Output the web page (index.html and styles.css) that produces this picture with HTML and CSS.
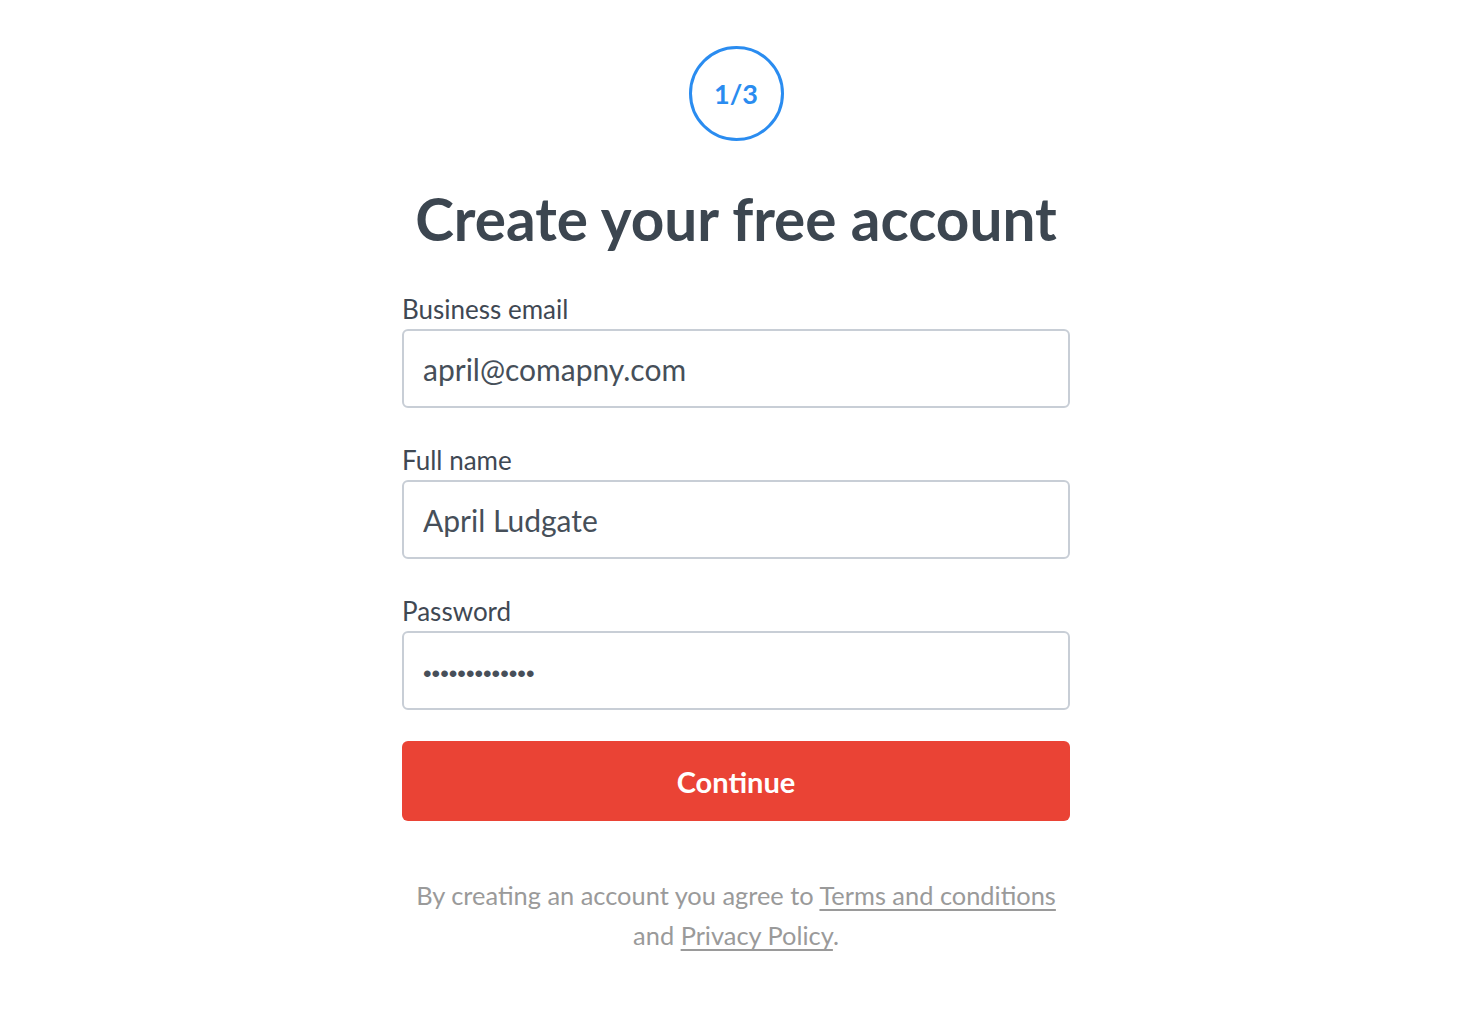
FILE: index.html
```html
<!DOCTYPE html>
<html lang="en">
<head>
<meta charset="utf-8">
<title>Create your free account</title>
<link rel="stylesheet" href="styles.css">
</head>
<body>
<main class="page">
  <div class="step">1/3</div>
  <h1 class="title">Create your free account</h1>
  <form class="form">
    <label class="field">
      <span class="label">Business email</span>
      <input class="input" type="email" value="april@comapny.com">
    </label>
    <label class="field">
      <span class="label">Full name</span>
      <input class="input" type="text" value="April Ludgate">
    </label>
    <label class="field">
      <span class="label">Password</span>
      <input class="input input-password" type="password" value="aprilludgate1">
    </label>
    <button class="button" type="button">Continue</button>
  </form>
  <p class="legal">By creating an account you agree to <a href="#">Terms and conditions</a><br>and <a href="#">Privacy Policy</a>.</p>
</main>
</body>
</html>
```

FILE: styles.css
```css
* { box-sizing: border-box; }
html, body { margin: 0; padding: 0; background: #ffffff; }
body { font-family: Lato, "Open Sans", sans-serif; }

.page {
  display: flex;
  flex-direction: column;
  align-items: center;
  padding-top: 46px;
}

.step {
  width: 95px;
  height: 95px;
  border: 3px solid #2a8cf0;
  border-radius: 50%;
  display: flex;
  align-items: center;
  justify-content: center;
  color: #2a8cf0;
  font-size: 27px;
  font-weight: 700;
}

.title {
  margin: 41px 0 0;
  font-size: 58.5px;
  line-height: 72px;
  font-weight: 700;
  color: #3c4650;
}

.form {
  width: 668px;
  margin-top: 39px;
  display: flex;
  flex-direction: column;
}

.field {
  display: flex;
  flex-direction: column;
}

.field + .field {
  margin-top: 36px;
}

.label {
  font-size: 26px;
  line-height: 32px;
  color: #3f4853;
  margin-bottom: 4px;
}

.input {
  height: 79px;
  border: 2px solid #c8ced6;
  border-radius: 6px;
  padding: 0 19px;
  font-family: inherit;
  font-size: 30px;
  color: #464f59;
  background: #fff;
  outline: none;
}

.input-password {
  font-family: "Liberation Sans", Arial, sans-serif;
  font-size: 24.5px;
  padding-top: 6px;
  color: #474f59;
}

.button {
  margin-top: 31px;
  height: 80px;
  border: none;
  border-radius: 6px;
  background: #ea4335;
  color: #ffffff;
  font-family: inherit;
  font-size: 29px;
  font-weight: 700;
  cursor: pointer;
}

.legal {
  margin: 54px 0 0;
  text-align: center;
  font-size: 25.4px;
  line-height: 40px;
  color: #9a9a9a;
}

.legal a {
  color: #9a9a9a;
  text-decoration: underline;
  text-underline-offset: 4px;
}
```
